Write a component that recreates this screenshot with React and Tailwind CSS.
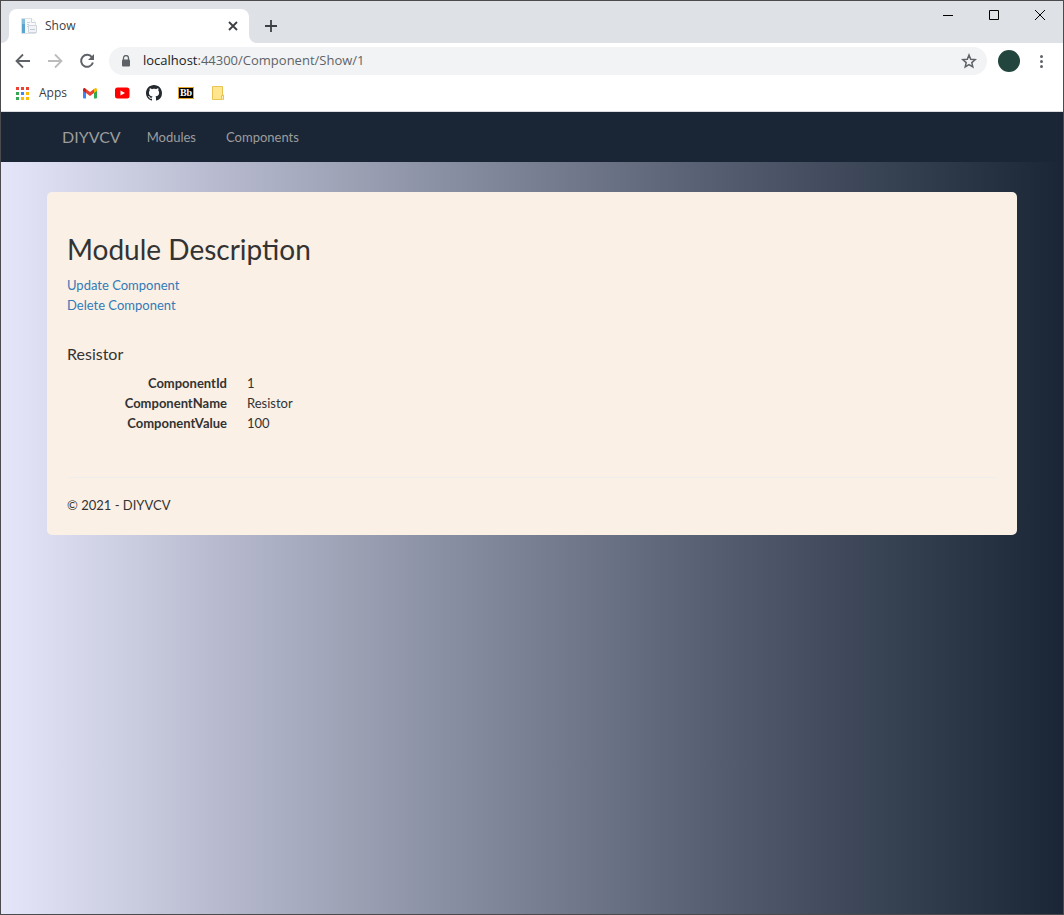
import { useState } from "react";

function TabIcon() {
  return (
    <svg className="size-4 shrink-0" viewBox="0 0 16 16" aria-hidden="true">
      <path d="M.5.5h10l4 3.500v11.500H.5z" fill="#f7f9fb" stroke="#dde1e6" />
      <path d="M1 1h3v14H1z" fill="#5ba3d0" />
      <path d="M1 1h3v5H1z" fill="#82bddd" />
      <path d="M6 4.500h3M6 6.500h2M6 8.500h1" stroke="#c9d3de" />
      <path d="M7.500 7.500h8v7h-8z" fill="#f2f3f6" stroke="#d0d4dc" />
      <path d="M9 11.500h5" stroke="#c3c9d3" />
      <path d="M10.500.5v4h4" fill="#fff" stroke="#d0d4dc" />
    </svg>
  );
}

function Stroke({ d, className }) {
  return (
    <svg className={className} viewBox="0 0 16 16" fill="none" stroke="currentColor" strokeWidth="1.800" aria-hidden="true">
      <path d={d} />
    </svg>
  );
}

function AppsIcon() {
  const colors = ["#ea4335", "#ea4335", "#ea4335", "#34a853", "#4285f4", "#fbbc04", "#34a853", "#fbbc04", "#fbbc04"];
  return (
    <svg className="size-[13px]" viewBox="0 0 13 13" aria-hidden="true">
      {colors.map((c, i) => (
        <rect key={i} x={(i % 3) * 5} y={Math.floor(i / 3) * 5} width="3" height="3" fill={c} />
      ))}
    </svg>
  );
}

function GmailIcon() {
  return (
    <svg className="size-4" viewBox="0 0 16 16" aria-hidden="true">
      <path d="M1 4.500v8q0 1 1 1h2V7z" fill="#4285f4" />
      <path d="M15 4.500v8q0 1-1 1h-2V7z" fill="#34a853" />
      <path d="M4 4v4l4 3 4-3V4L8 7z" fill="#ea4335" />
      <path d="M1 4.500Q1 2.500 2.800 3L4 4v4L1 5.800z" fill="#c5221f" />
      <path d="M15 4.500Q15 2.500 13.200 3L12 4v4l3-2.200z" fill="#fbbc04" />
    </svg>
  );
}

function YoutubeIcon() {
  return (
    <svg className="size-4" viewBox="0 0 16 16" aria-hidden="true">
      <rect x="1" y="2.500" width="14.500" height="11" rx="2.500" fill="#f00" />
      <path d="M6.500 5.500v5L11 8z" fill="#fff" />
    </svg>
  );
}

function GithubIcon() {
  return (
    <svg className="size-4" viewBox="0 0 16 16" fill="#24292e" aria-hidden="true">
      <path d="M8 0C3.580 0 0 3.580 0 8c0 3.540 2.290 6.530 5.470 7.590.4.070.55-.17.55-.38 0-.19-.01-.82-.01-1.490-2.010.37-2.530-.49-2.690-.94-.09-.23-.48-.94-.82-1.130-.28-.15-.68-.52-.01-.53.63-.01 1.080.58 1.230.82.72 1.210 1.870.87 2.330.66.070-.52.28-.87.51-1.070-1.780-.2-3.640-.89-3.640-3.950 0-.87.31-1.590.82-2.150-.08-.2-.36-1.020.08-2.120 0 0 .67-.21 2.200.82.64-.18 1.320-.27 2-.27s1.360.09 2 .27c1.530-1.040 2.200-.82 2.200-.82.44 1.100.16 1.920.08 2.120.51.56.82 1.270.82 2.150 0 3.070-1.870 3.750-3.650 3.950.29.25.54.73.54 1.480 0 1.070-.01 1.930-.01 2.200 0 .21.15.46.55.38A8.010 8.010 0 0 0 16 8c0-4.420-3.580-8-8-8z" />
    </svg>
  );
}

function NoteIcon() {
  return (
    <svg className="size-4" viewBox="0 0 16 16" aria-hidden="true">
      <path d="M2.500 1.500h10v8.500h1v4.500h-11z" fill="#ffe68f" stroke="#e8c452" />
      <path d="M11.500 14v-3.500h2v4" fill="#ffefb5" stroke="#e8c452" />
    </svg>
  );
}

function BrowserChrome() {
  const [path, setPath] = useState(":44300/Component/Show/1");
  return (
    <div className="font-['Open_Sans','Noto_Sans',sans-serif] text-[13px] text-[#3c4043]">
      <div className="flex h-[42px] bg-[#dee1e6]">
        <div className="flex items-end">
          <div className="flex size-2 items-end overflow-hidden bg-white">
            <div className="size-2 rounded-br-lg bg-[#dee1e6]" />
          </div>
          <div className="flex h-[34px] w-60 items-center rounded-t-lg bg-white pr-2 pl-3">
            <TabIcon />
            <span className="ml-2 grow text-xs">Show</span>
            <button type="button" aria-label="Close tab" className="flex size-4 items-center justify-center">
              <Stroke className="size-4" d="M4 4l8 8M12 4l-8 8" />
            </button>
          </div>
          <div className="flex size-2 items-end bg-white">
            <div className="size-2 rounded-bl-lg bg-[#dee1e6]" />
          </div>
        </div>
        <button type="button" aria-label="New tab" className="mt-4 ml-1 flex h-[18px] w-5 items-center justify-center">
          <Stroke className="size-4" d="M8 2v12M2 8h12" />
        </button>
        <div className="ml-auto flex h-7 text-black">
          <button type="button" aria-label="Minimize" className="flex w-[46px] items-center justify-center">
            <svg className="size-3" viewBox="0 0 12 12" aria-hidden="true">
              <path d="M1 6.500h10" stroke="currentColor" />
            </svg>
          </button>
          <button type="button" aria-label="Maximize" className="flex w-[46px] items-center justify-center">
            <svg className="size-3" viewBox="0 0 12 12" fill="none" aria-hidden="true">
              <path d="M1.500 1.500h9v9h-9z" stroke="currentColor" />
            </svg>
          </button>
          <button type="button" aria-label="Close window" className="flex w-[46px] items-center justify-center">
            <svg className="size-3" viewBox="0 0 12 12" aria-hidden="true">
              <path d="M1 1l10 10M11 1L1 11" stroke="currentColor" />
            </svg>
          </button>
        </div>
      </div>

      <div className="flex h-9 items-center bg-white px-[14px] text-[#5f6368]">
        <button type="button" aria-label="Back">
          <Stroke className="size-4" d="M15 8H2M8 1.500L1.500 8 8 14.500" />
        </button>
        <button type="button" aria-label="Forward" className="ml-4 text-[#babcbe]">
          <Stroke className="size-4" d="M1 8h13M8 1.500L14.500 8 8 14.500" />
        </button>
        <button type="button" aria-label="Reload" className="ml-4">
          <svg className="size-4" viewBox="0 0 16 16" aria-hidden="true">
            <path d="M13 4.300A6 6 0 1 0 13.900 9.500" fill="none" stroke="currentColor" strokeWidth="2" />
            <path d="M15 1v6H9z" fill="currentColor" />
          </svg>
        </button>
        <div className="ml-[14px] flex h-7 grow items-center rounded-full bg-[#f1f3f4] pr-[10px] pl-3">
          <svg className="h-3 w-[10px]" viewBox="0 0 10 12" aria-hidden="true">
            <path d="M2.500 5V3a2.500 2.500 0 0 1 5 0v2" fill="none" stroke="currentColor" strokeWidth="1.300" />
            <rect x="1" y="4.500" width="8" height="7" rx="1" fill="currentColor" />
          </svg>
          <label htmlFor="address" className="ml-3 text-[#202124]">localhost</label>
          <input
            id="address"
            type="text"
            value={path}
            onChange={(e) => setPath(e.target.value)}
            className="min-w-0 grow bg-transparent outline-none"
          />
          <button type="button" aria-label="Bookmark this page">
            <svg className="size-4" viewBox="0 0 16 16" fill="none" stroke="currentColor" strokeWidth="1.500" aria-hidden="true">
              <path d="M8 2l1.700 4.200 4.500.4-3.400 3 1 4.400L8 11.600 4.200 14l1-4.400-3.400-3 4.500-.4z" />
            </svg>
          </button>
        </div>
        <button type="button" aria-label="Profile" className="ml-[11px] size-[22px] rounded-full bg-[#22463e]" />
        <button type="button" aria-label="Menu" className="ml-[13px]">
          <svg className="size-4" viewBox="0 0 16 16" fill="currentColor" aria-hidden="true">
            <circle cx="8.500" cy="3.500" r="1.500" />
            <circle cx="8.500" cy="8.500" r="1.500" />
            <circle cx="8.500" cy="13.500" r="1.500" />
          </svg>
        </button>
      </div>

      <nav aria-label="Bookmarks" className="flex h-[33px] items-center gap-4 border-b border-[#dadce0] bg-white pb-1 pl-[15px]">
        <a href="#apps" className="flex items-center gap-[10px] text-xs">
          <AppsIcon />
          Apps
        </a>
        <div className="-ml-px flex items-center gap-4">
          <a href="#gmail" aria-label="Gmail"><GmailIcon /></a>
          <a href="#youtube" aria-label="YouTube"><YoutubeIcon /></a>
          <a href="#github" aria-label="GitHub"><GithubIcon /></a>
          <a
            href="#blackboard"
            className="flex h-3 w-4 items-center justify-center border border-[#e3a72f] bg-black font-['Liberation_Serif',serif] text-[10px] leading-none font-bold text-white"
          >
            Bb
          </a>
          <a href="#notes" aria-label="Notes"><NoteIcon /></a>
        </div>
      </nav>
    </div>
  );
}

const fields = [
  ["ComponentId", "1"],
  ["ComponentName", "Resistor"],
  ["ComponentValue", "100"],
];

export default function App() {
  return (
    <div className="flex min-h-screen flex-col border border-[#4b4b4d]">
      <BrowserChrome />
      <div className="flex grow flex-col bg-linear-to-r from-[#e6e6fa] to-[#1a2636] font-[Lato,sans-serif] text-[13px] leading-5 text-[#333]">
        <header className="bg-[#1a2636] text-[#9d9d9d]">
          <nav className="mx-auto flex h-[50px] max-w-[970px] items-center px-[15px] pb-px">
            <a href="#home" className="pr-[26px] text-base">DIYVCV</a>
            <a href="#modules" className="pr-[15px]">Modules</a>
            <a href="#components" className="pl-[15px]">Components</a>
          </nav>
        </header>
        <main className="mx-auto mt-[30px] w-full max-w-[970px] rounded-[5px] bg-[#faf0e6] px-5 pt-10 pb-5">
          <h1 className="text-[28px] leading-[34px]">Module Description</h1>
          <div className="mt-[9px] flex flex-col items-start text-[#337ab7]">
            <a href="#update">Update Component</a>
            <a href="#delete">Delete Component</a>
          </div>
          <h2 className="mt-[27px] text-base leading-6">Resistor</h2>
          <dl className="mt-[7px] grid grid-cols-[160px_1fr] gap-x-5">
            {fields.map(([name, value]) => (
              <div key={name} className="contents">
                <dt className="text-right font-bold">{name}</dt>
                <dd>{value}</dd>
              </div>
            ))}
          </dl>
          <hr className="mt-11 border-[#eee]" />
          <footer className="pt-[17px]">© 2021 - DIYVCV</footer>
        </main>
      </div>
    </div>
  );
}
